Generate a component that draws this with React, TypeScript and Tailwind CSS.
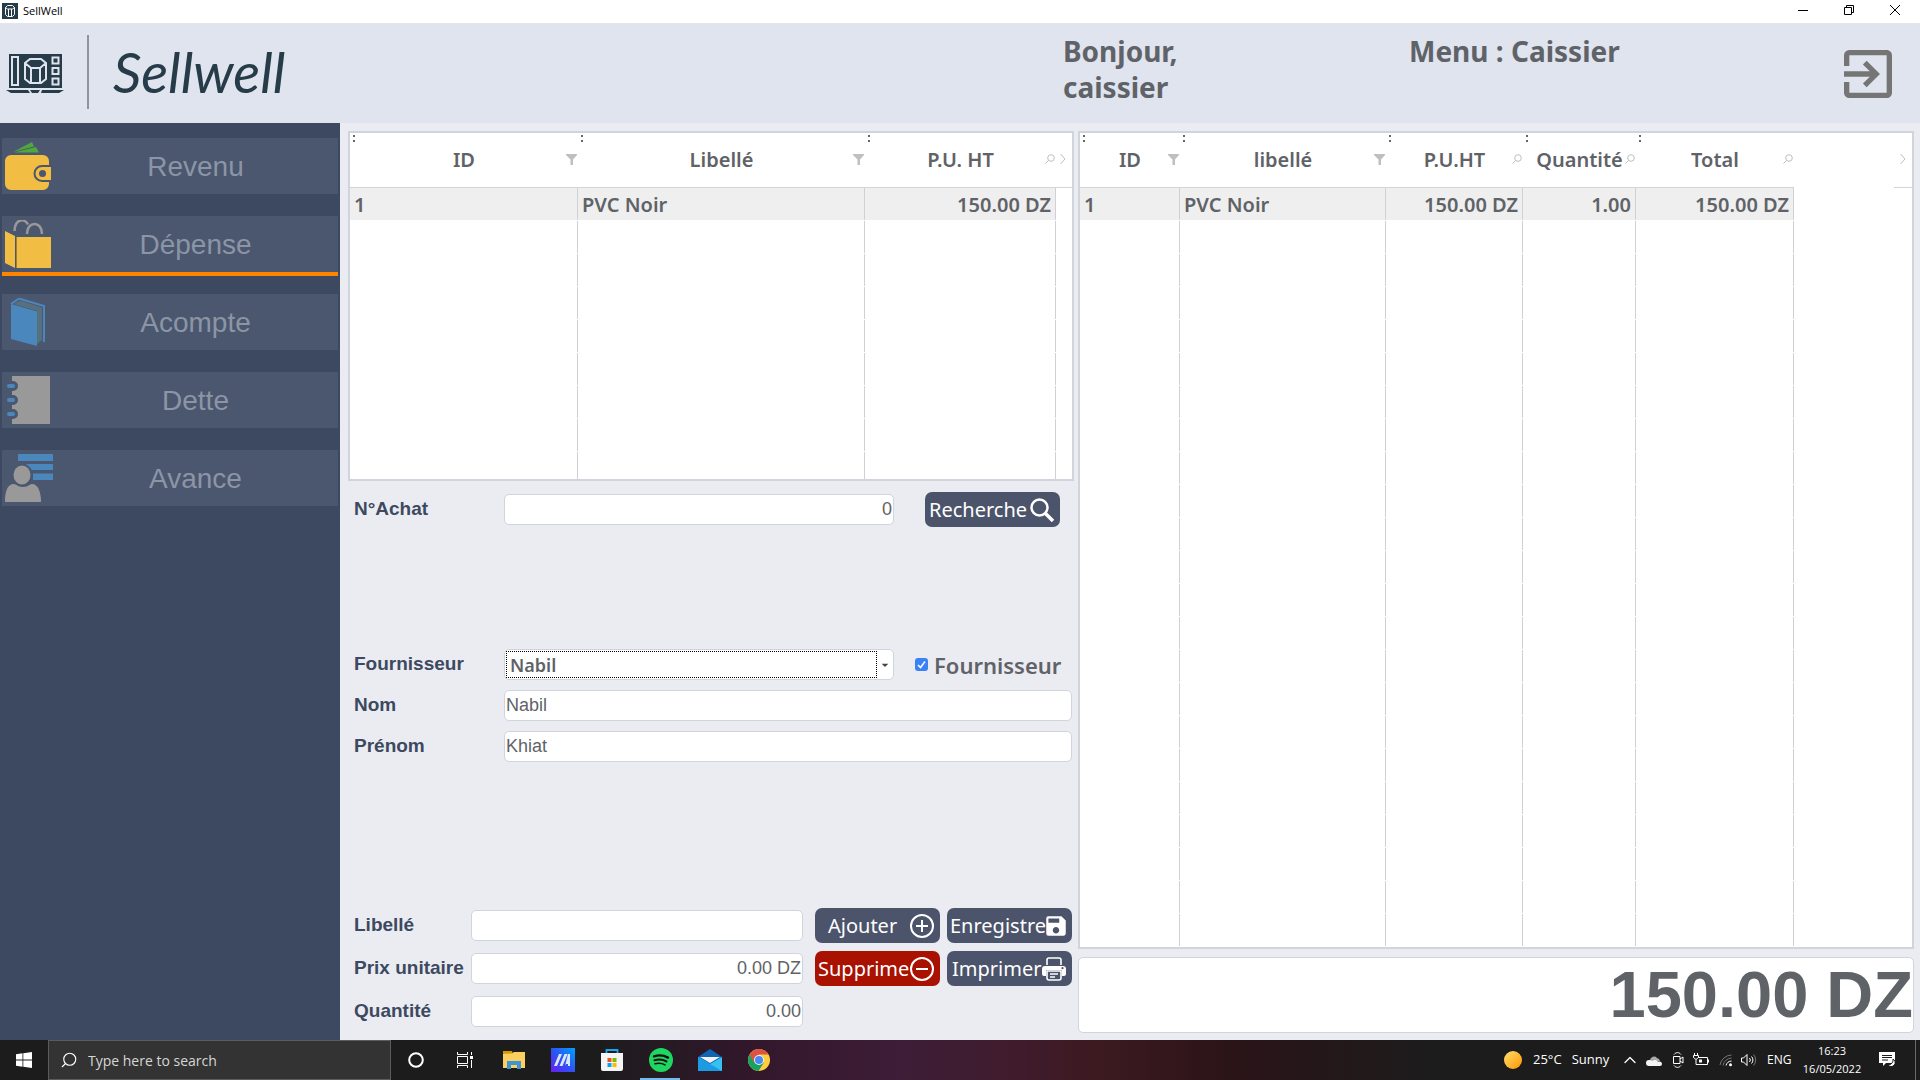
import type { ReactNode } from "react";
import { MdArrowDropDown, MdExitToApp, MdSave } from "react-icons/md";
import { ChevronUp, Search } from "lucide-react";

type Column = {
  label: string;
  width: string;
  icon: "filter" | "search";
  align?: "right";
};

const articleColumns: Column[] = [
  { label: "ID", width: "w-[228px]", icon: "filter" },
  { label: "Libellé", width: "w-[287px]", icon: "filter" },
  { label: "P.U. HT", width: "w-[191px]", icon: "search", align: "right" },
];

const cartColumns: Column[] = [
  { label: "ID", width: "w-[100px]", icon: "filter" },
  { label: "libellé", width: "w-[206px]", icon: "filter" },
  { label: "P.U.HT", width: "w-[137px]", icon: "search", align: "right" },
  { label: "Quantité", width: "w-[113px]", icon: "search", align: "right" },
  { label: "Total", width: "w-[158px]", icon: "search", align: "right" },
];

function FilterIcon() {
  return (
    <svg viewBox="0 0 11 11" className="h-[11px] w-[11px]" fill="#bfbfbf">
      <path d="M0 0h11v1L7 5.500V11H4.500V5.500L0 1z" />
    </svg>
  );
}

function LensIcon() {
  return (
    <svg viewBox="0 0 10 10" className="h-[10px] w-[10px]" fill="none" stroke="#bfbfbf">
      <circle cx="6" cy="4" r="3.3" />
      <path d="M3.600 6.400L.5 9.500" />
    </svg>
  );
}

function DataTable({ columns, rows, lineCount }: { columns: Column[]; rows: string[][]; lineCount: number }) {
  const lines = Array.from({ length: lineCount }, (_, i) => rows[i]);

  return (
    <table className="w-full table-fixed border-separate border-spacing-0 font-['Noto_Sans',sans-serif] text-[20px] text-[#5f6368]">
      <thead>
        <tr className="h-[55px]">
          {columns.map((col) => (
            <th key={col.label} className={`relative border-b border-[#d0d4dc] p-0 text-center font-semibold ${col.width}`}>
              <span className="absolute left-[3px] top-[2px] flex flex-col gap-[3px]">
                <i className="h-[2px] w-[2px] bg-[#666]" />
                <i className="h-[2px] w-[2px] bg-[#666]" />
              </span>
              {col.label}
              <button type="button" aria-label={`Options ${col.label}`} className="absolute right-px top-[21px]">
                {col.icon === "filter" ? <FilterIcon /> : <LensIcon />}
              </button>
            </th>
          ))}
          <th className="relative p-0">
            <button type="button" aria-label="Colonnes suivantes" className="absolute right-[6px] top-[21px]">
              <svg viewBox="0 0 6 10" className="h-[10px] w-[6px]" fill="none" stroke="#bfbfbf">
                <path d="M.5 0l4.500 5L.5 10" />
              </svg>
            </button>
            <span className="absolute right-0 bottom-0 h-px w-[18px] bg-[#d0d4dc]" />
          </th>
        </tr>
      </thead>
      <tbody>
        {lines.map((row, i) => (
          <tr key={i}>
            {columns.map((col) => (
              <td key={col.label} className={`p-0 font-semibold ${col.align === "right" ? "text-right" : "text-left"}`}>
                <div className={`mb-px h-8 border-r border-[#d0d1d4] px-1 leading-[33px] ${row ? "bg-[#efefef]" : ""}`}>
                  {row ? row[columns.indexOf(col)] : null}
                </div>
              </td>
            ))}
            <td className="p-0" />
          </tr>
        ))}
      </tbody>
    </table>
  );
}

function WalletIcon() {
  return (
    <svg viewBox="0 0 48 48" className="h-12 w-12">
      <path d="M8 10L27 0l2 4.500z" fill="#4fa83d" />
      <path d="M9 10.500L31 5l3 5.500z" fill="#4fa83d" />
      <path d="M6 13h32a6 6 0 0 1 6 6v4h-7a8.500 8.500 0 0 0 0 17h7v2a6 6 0 0 1-6 6H6a6 6 0 0 1-6-6V19a6 6 0 0 1 6-6z" fill="#f1bd42" />
      <path d="M37 25h9v13h-9a6.500 6.500 0 0 1 0-13z" fill="#f1bd42" />
      <circle cx="37.500" cy="31.500" r="3.500" fill="#4b576f" />
    </svg>
  );
}

function BagIcon() {
  return (
    <svg viewBox="0 0 48 48" className="h-12 w-12">
      <path d="M9.500 11C10-2 20-2 23 4.500M22 14C22 .5 37 .5 37 14" fill="none" stroke="#999" strokeWidth="2.500" />
      <path d="M0 11l10 5v32L0 43z" fill="#f1bd42" />
      <path d="M12 17h34v31H12z" fill="#f1bd42" />
      <path d="M11.500 17v31" stroke="#9b7f45" />
    </svg>
  );
}

function BookIcon() {
  return (
    <svg viewBox="0 0 48 48" className="h-12 w-12">
      <path d="M14 .5L39 8v36" fill="none" stroke="#4a87bd" strokeWidth="2" />
      <path d="M15 2.500L37 9.500V42l-5 4V13L8 6z" fill="#567080" />
      <path d="M6 6l26 7.500V48L6 41z" fill="#4a87bd" />
      <path d="M6 6l8-5.500" stroke="#4a87bd" strokeWidth="2" />
    </svg>
  );
}

function NotebookIcon() {
  return (
    <svg viewBox="0 0 48 48" className="h-12 w-12">
      <path d="M7 0h38v48H7z" fill="#999" />
      <path d="M4 10h4M4 24h4M4 38h4" stroke="#4b576f" strokeWidth="10" strokeLinecap="round" />
      <path d="M4 10h4M4 24h4M4 38h4" stroke="#4a87bd" strokeWidth="4" strokeLinecap="round" />
    </svg>
  );
}

function PersonIcon() {
  return (
    <svg viewBox="0 0 48 48" className="h-12 w-12">
      <path d="M13 0h35v7H13zM21 10h27v6H26zM28 19.500h20V26H28z" fill="#4a87bd" />
      <circle cx="17" cy="21" r="11" fill="#4b576f" />
      <ellipse cx="17" cy="21" rx="8.500" ry="9.500" fill="#999" />
      <path d="M0 48c0-10 2-18 9-18 3 0 3 3 9 3s6-3 9-3c6 0 9 8 9 18z" fill="#999" />
    </svg>
  );
}

const menu: { label: string; icon: ReactNode; active?: boolean }[] = [
  { label: "Revenu", icon: <WalletIcon /> },
  { label: "Dépense", icon: <BagIcon />, active: true },
  { label: "Acompte", icon: <BookIcon /> },
  { label: "Dette", icon: <NotebookIcon /> },
  { label: "Avance", icon: <PersonIcon /> },
];

function TitleBar() {
  return (
    <div className="flex h-6 items-start justify-between border-b border-[#e4e5ea] bg-white px-[2px]">
      <div className="flex items-center gap-[5px] pt-[3px]">
        <svg viewBox="0 0 16 16" className="h-4 w-4">
          <path d="M0 0h16v16H0z" fill="#263c48" />
          <path d="M5.500 2.500h5l2 2v7l-2 2h-5l-2-2v-7zM3.500 4.500l2 1.500h5l2-1.500M6.500 6v7M9.500 6v7" fill="none" stroke="#fff" />
        </svg>
        <span className="font-['Open_Sans',sans-serif] text-[11px] leading-4 text-black">SellWell</span>
      </div>
      <div className="flex">
        <button type="button" aria-label="Réduire" className="grid h-5 w-[46px] place-items-center">
          <svg viewBox="0 0 10 10" className="h-[10px] w-[10px]" stroke="#000"><path d="M0 5.500h10" /></svg>
        </button>
        <button type="button" aria-label="Restaurer" className="grid h-5 w-[46px] place-items-center">
          <svg viewBox="0 0 10 10" className="h-[10px] w-[10px]" fill="none" stroke="#000">
            <path d="M.5 2.500h7v7h-7zM2.500 2.500v-2h7v7h-2" />
          </svg>
        </button>
        <button type="button" aria-label="Fermer" className="grid h-5 w-[46px] place-items-center">
          <svg viewBox="0 0 10 10" className="h-[10px] w-[10px]" stroke="#000"><path d="M0 0l10 10M10 0L0 10" /></svg>
        </button>
      </div>
    </div>
  );
}

function Header() {
  return (
    <header className="flex h-[99px] bg-[#e0e4ef] font-['Noto_Sans',sans-serif] text-[28px] leading-9 font-bold text-[#5f6368]">
      <div className="flex flex-1 items-center pb-1 pl-[6px]">
        <svg viewBox="0 0 60 40" className="mt-1 h-10 w-[60px]">
          <path d="M3 0h53v34H3z" fill="#263c48" />
          <path d="M0 36h22l2 3H5zM24 36h10l-2 3h-6zM36 36h22l-5 3H35z" fill="#263c48" />
          <path d="M6 3h6v28H6z" fill="none" stroke="#e0e4ef" strokeWidth="2" />
          <path d="M24 5h11l5 4v16l-5 4H24l-5-4V9zM19 9l6 5h9l6-5M25 14v15M34 14v15" fill="none" stroke="#e0e4ef" strokeWidth="2" />
          <path d="M46.500 3.500h6v6h-6zM46.500 14h6v6h-6zM46.500 24.500h6v6h-6z" fill="#263c48" stroke="#e0e4ef" strokeWidth="2" />
        </svg>
        <div className="ml-[21px] h-[74px] w-[2px] bg-[#8f95a0]" />
        <span className="ml-6 font-['Lato',sans-serif] text-[56px] leading-[60px] font-normal text-[#263c48] italic">Sellwell</span>
      </div>
      <p className="w-[346px] pt-[9px]">
        Bonjour,
        <br />
        caissier
      </p>
      <p className="w-[427px] pt-[9px]">Menu : Caissier</p>
      <button type="button" aria-label="Déconnexion" className="mr-5 self-center">
        <MdExitToApp size={64} color="#757575" />
      </button>
    </header>
  );
}

function Sidebar() {
  return (
    <nav className="flex w-[340px] shrink-0 flex-col gap-[18px] bg-[#3d4960] px-[2px] pt-[15px]">
      {menu.map((item) => (
        <button
          key={item.label}
          type="button"
          className={`flex h-[60px] items-center border-b-4 bg-[#4b576f] bg-clip-padding pl-[3px] font-['Liberation_Sans',Arial,sans-serif] text-[28px] text-[#8b95a5] ${
            item.active ? "border-[#ff8500]" : "border-transparent"
          }`}
        >
          {item.icon}
          <span className="flex-1 pt-[2px] text-center">{item.label}</span>
        </button>
      ))}
    </nav>
  );
}

const fieldClass =
  "h-[31px] w-full min-w-0 rounded-[5px] border border-[#d0d4dc] bg-white px-px font-['Liberation_Sans',Arial,sans-serif] text-[18px] text-[#5f6368] outline-none";
const labelClass =
  "pb-[2px] font-['Liberation_Sans',Arial,sans-serif] text-[19px] leading-6 font-bold text-[#3d4960] whitespace-nowrap";
const buttonClass =
  "flex h-[35px] items-center rounded-[7px] text-white font-['Noto_Sans',sans-serif] text-[20px] leading-6 whitespace-nowrap";

function PurchaseForm() {
  return (
    <form className="flex flex-1 flex-col pt-[11px] pr-[2px] pb-1 pl-[6px]">
      <div className="grid grid-cols-[150px_1fr_178px] items-center">
        <label htmlFor="achat" className={labelClass}>N°Achat</label>
        <input id="achat" defaultValue="0" className={`${fieldClass} text-right`} />
        <button type="button" className={`${buttonClass} ml-[31px] w-[135px] justify-between bg-[#4b546a] pr-[6px] pl-1`}>
          Recherche
          <svg viewBox="0 0 24 24" className="h-6 w-6" fill="none" stroke="#fff">
            <circle cx="9.500" cy="9.500" r="8" strokeWidth="2.500" />
            <path d="M15 15l8 8" strokeWidth="3.500" />
          </svg>
        </button>
      </div>

      <div className="mt-[122px] grid grid-cols-[150px_1fr_178px] items-center gap-y-[10px]">
        <label htmlFor="fournisseur" className={labelClass}>Fournisseur</label>
        <div className="flex h-[31px] items-center rounded-[5px] border border-[#d0d4dc] bg-white p-px">
          <select
            id="fournisseur"
            className="h-[27px] min-w-0 flex-1 appearance-none border border-dotted border-black pl-[3px] font-['Noto_Sans',sans-serif] text-[18px] leading-6 font-semibold text-[#5f6368] outline-none"
          >
            <option>Nabil</option>
          </select>
          <MdArrowDropDown size={16} color="#444" className="-mr-px" />
        </div>
        <label className="flex items-center gap-[6px] pl-[21px] font-['Noto_Sans',sans-serif] text-[22px] leading-[30px] font-semibold text-[#5f6368]">
          <span className="relative flex">
            <input type="checkbox" defaultChecked className="h-[13px] w-[13px] appearance-none rounded-[3px] bg-[#3b82f6]" />
            <svg viewBox="0 0 13 13" className="pointer-events-none absolute inset-0" fill="none" stroke="#fff" strokeWidth="1.500">
              <path d="M3 7l2.500 2.500L10 3.500" />
            </svg>
          </span>
          Fournisseur
        </label>

        <label htmlFor="nom" className={labelClass}>Nom</label>
        <input id="nom" defaultValue="Nabil" className={`${fieldClass} col-span-2`} />

        <label htmlFor="prenom" className={labelClass}>Prénom</label>
        <input id="prenom" defaultValue="Khiat" className={`${fieldClass} col-span-2`} />
      </div>

      <div className="mt-auto grid auto-rows-[35px] grid-cols-[117px_1fr_137px_132px] items-center gap-y-2">
        <label htmlFor="libelle" className={labelClass}>Libellé</label>
        <input id="libelle" className={fieldClass} />
        <button type="button" className={`${buttonClass} ml-3 justify-between bg-[#4b546a] pr-[6px] pl-[13px]`}>
          Ajouter
          <svg viewBox="0 0 24 24" className="h-6 w-6" fill="none" stroke="#fff" strokeWidth="2">
            <circle cx="12" cy="12" r="11" />
            <path d="M12 6v12M6 12h12" />
          </svg>
        </button>
        <button type="button" className={`${buttonClass} ml-[7px] justify-between bg-[#4b546a] px-[3px]`}>
          Enregistre
          <MdSave size={26} className="-ml-1 shrink-0" />
        </button>

        <label htmlFor="prix" className={labelClass}>Prix unitaire</label>
        <input id="prix" defaultValue="0.00 DZ" className={`${fieldClass} text-right`} />
        <button type="button" className={`${buttonClass} ml-3 justify-between bg-[#a91101] pr-[6px] pl-[3px]`}>
          Supprime
          <svg viewBox="0 0 24 24" className="h-6 w-6 shrink-0" fill="none" stroke="#fff" strokeWidth="2">
            <circle cx="12" cy="12" r="11" />
            <path d="M6 12h12" />
          </svg>
        </button>
        <button type="button" className={`${buttonClass} ml-[7px] justify-between bg-[#4b546a] pr-[6px] pl-[5px]`}>
          Imprimer
          <svg viewBox="0 0 24 24" className="h-6 w-6" fill="none" stroke="#fff" strokeWidth="1.600">
            <path d="M5 8V3a2 2 0 0 1 2-2h10a2 2 0 0 1 2 2v5" />
            <path d="M3 9h18a3 3 0 0 1 3 3v5a2 2 0 0 1-2 2h-2v-6H4v6H2a2 2 0 0 1-2-2v-5a3 3 0 0 1 3-3z" fill="#fff" stroke="none" />
            <circle cx="20.500" cy="11.200" r="1.100" fill="#4b546a" stroke="none" />
            <path d="M5 14h14v7a2 2 0 0 1-2 2H7a2 2 0 0 1-2-2zM8 17h8M8 20h5" fill="#4b546a" />
          </svg>
        </button>

        <label htmlFor="quantite" className={labelClass}>Quantité</label>
        <input id="quantite" defaultValue="0.00" className={`${fieldClass} text-right`} />
      </div>
    </form>
  );
}

const slotClass = "relative grid h-10 w-[49px] place-items-center";

function Taskbar() {
  return (
    <footer className="flex h-10 items-center bg-[linear-gradient(90deg,#1c1c1c_31%,#32172b_39%,#3d1d37_47%,#3f1b2c_53%,#3c1a20_57%,#2b1418_64%,#1c1c1c_75%)] font-['Open_Sans',sans-serif] text-white">
      <button type="button" aria-label="Démarrer" className="grid h-10 w-12 place-items-center">
        <svg viewBox="0 0 16 16" className="h-4 w-4" fill="#fff">
          <path d="M0 2.200L6.500 1.300v6.200H0zM7.300 1.200L16 0v7.500H7.300zM0 8.400h6.500v6.300L0 13.800zM7.300 8.400H16V16l-8.700-1.200z" />
        </svg>
      </button>
      <label className="flex h-10 w-[343px] items-center gap-[10px] border border-[#5c5c5c] bg-[#333] pl-[11px]">
        <Search size={18} strokeWidth={1.500} className="-scale-x-100" />
        <input aria-label="Type here to search" placeholder="Type here to search" className="min-w-0 flex-1 text-[14px] placeholder-[#d6d6d6] outline-none" />
      </label>

      <button type="button" aria-label="Cortana" className={slotClass}>
        <svg viewBox="0 0 16 16" className="h-4 w-4" fill="none" stroke="#fff" strokeWidth="2"><circle cx="8" cy="8" r="6.800" /></svg>
      </button>
      <button type="button" aria-label="Task view" className={slotClass}>
        <svg viewBox="0 0 16 16" className="h-4 w-4" fill="none" stroke="#fff">
          <path d="M.5 0v2.500h10V0M.5 4.500h10v7H.5zM.5 16v-2.500h10V16M14.500 0v3M14.500 8v8" />
          <path d="M13 4h3v3h-3z" fill="#fff" stroke="none" />
        </svg>
      </button>
      <button type="button" aria-label="Explorer" className={slotClass}>
        <svg viewBox="0 0 22 18" className="h-[18px] w-[22px]">
          <path d="M0 0h9l1 3H0z" fill="#d99a00" />
          <path d="M0 3l9-.5L11 1h11v16H0z" fill="#fbd061" />
          <path d="M4 10h14v8h-4v-4H8v4H4z" fill="#3d94d6" />
        </svg>
      </button>
      <button type="button" aria-label="MyAsus" className={slotClass}>
        <svg viewBox="0 0 24 24" className="h-6 w-6">
          <defs>
            <linearGradient id="asus" x1="0" y1="1" x2="1" y2="0">
              <stop offset="0" stopColor="#6a1cf5" />
              <stop offset=".5" stopColor="#2b55f5" />
              <stop offset="1" stopColor="#00a2ff" />
            </linearGradient>
          </defs>
          <path d="M0 0h24v24H0z" fill="url(#asus)" />
          <path d="M3 18L8 6h3L6 18zM8.500 18l5-12h3l-5 12zM14 18l3-12h2v12h-2v-2h-2z" fill="#dbe6ff" />
        </svg>
      </button>
      <button type="button" aria-label="Store" className={slotClass}>
        <svg viewBox="0 0 24 24" className="h-6 w-6">
          <path d="M6.500 6V2h11v4" fill="none" stroke="#1ba8ef" strokeWidth="1.800" />
          <path d="M1 5h22v16a2 2 0 0 1-2 2H3a2 2 0 0 1-2-2z" fill="#f4f4f4" />
          <path d="M7.500 10h4v4h-4z" fill="#f25022" />
          <path d="M12.500 10h4v4h-4z" fill="#7fba00" />
          <path d="M7.500 15h4v4h-4z" fill="#00a4ef" />
          <path d="M12.500 15h4v4h-4z" fill="#ffb900" />
        </svg>
      </button>
      <button type="button" aria-label="Spotify" className={slotClass}>
        <svg viewBox="0 0 24 24" className="h-6 w-6" fill="none" stroke="#111" strokeLinecap="round">
          <circle cx="12" cy="12" r="12" fill="#1ed760" stroke="none" />
          <path d="M5 8.300c5-1.500 10-1 14 1.300" strokeWidth="2.400" />
          <path d="M5.500 12.200c4.500-1.200 8.500-.8 12 1.200" strokeWidth="2" />
          <path d="M6 15.800c3.800-.9 7-.6 10 1.100" strokeWidth="1.600" />
        </svg>
        <span className="absolute bottom-0 left-1 right-[5px] h-[2px] bg-[#76b9ed]" />
      </button>
      <button type="button" aria-label="Mail" className={slotClass}>
        <svg viewBox="0 0 24 22" className="h-[22px] w-6">
          <path d="M0 8l12-8 12 8v14H0z" fill="#0f64b4" />
          <path d="M0 8l12 7 12-7v14H0z" fill="#35c1f1" />
          <path d="M0 8l24 14H0z" fill="#1c9be3" />
          <path d="M2 8h20l-10 6z" fill="#f2f2f2" />
        </svg>
      </button>
      <button type="button" aria-label="Chrome" className={slotClass}>
        <svg viewBox="0 0 22 22" className="h-[22px] w-[22px]">
          <circle cx="11" cy="11" r="11" fill="#ffcd40" />
          <path d="M11 11L1.500 5.500A11 11 0 0 0 10.500 22L15.800 13.700z" fill="#1aa15f" />
          <path d="M11 5.500h9.500A11 11 0 0 0 1.500 5.500l4.700 8z" fill="#de5246" />
          <circle cx="11" cy="11" r="5" fill="#f1f1f1" />
          <circle cx="11" cy="11" r="4" fill="#4a8af4" />
        </svg>
      </button>

      <div className="ml-auto flex items-center">
        <svg viewBox="0 0 18 18" className="h-[18px] w-[18px]">
          <defs>
            <linearGradient id="sun" x1="0" y1="0" x2="1" y2="1">
              <stop offset="0" stopColor="#ffe070" />
              <stop offset="1" stopColor="#ff9500" />
            </linearGradient>
          </defs>
          <circle cx="9" cy="9" r="9" fill="url(#sun)" />
        </svg>
        <div className="ml-[11px] flex w-[91px] gap-[10px] text-[13px]">
          <span>25°C</span>
          <span>Sunny</span>
        </div>
        <ChevronUp size={20} strokeWidth={1.500} className="-ml-1" />
        <svg viewBox="0 0 16 11" className="ml-[6px] h-[11px] w-4">
          <path d="M4 5a4 4 0 0 1 7-2 4 4 0 0 1 3 3L4 8z" fill="#aaa" />
          <path d="M3 11a3 3 0 0 1 0-6c1 0 2 0 3 1 3-2 5-1 6 1 2-1 4 0 4 2a2 2 0 0 1-2 2z" fill="#f4f4f4" />
        </svg>
        <svg viewBox="0 0 12 16" className="ml-[10px] h-4 w-3" fill="none" stroke="#fff">
          <path d="M1.500 4.500H8v7H1.500zM8 7l3-2v6L8 9M2 2.500C4 0 7 0 9 2.500M2 13.500c2 2.500 5 2.500 7 0" />
        </svg>
        <svg viewBox="0 0 16 14" className="ml-[9px] h-[14px] w-4" fill="none" stroke="#fff">
          <path d="M5 4.500h9.500v7h-10M15.500 6.500v3M1.500 0v2.500M4.500 0v2.500M.5 2.500h5v2L3 6.500.5 4.500zM3 6.500v5h2" />
          <path d="M6 6.500h3v3H6z" fill="#fff" stroke="none" />
        </svg>
        <svg viewBox="0 0 14 14" className="ml-[10px] h-[14px] w-[14px]" fill="none">
          <path d="M1 12A12 12 0 0 1 12.500 2M4 12.500a9 9 0 0 1 8.500-7.500" stroke="#777" />
          <path d="M7 12.500a6 6 0 0 1 5.500-4.500" stroke="#fff" />
          <circle cx="11.500" cy="11.700" r="1.500" fill="#fff" />
        </svg>
        <svg viewBox="0 0 16 14" className="ml-2 h-[14px] w-4" fill="none" stroke="#fff">
          <path d="M.5 5h2l3.500-3.500v11L2.500 9h-2zM8.500 5a3 3 0 0 1 0 4M10.500 3.500a5 5 0 0 1 0 7" />
          <path d="M12.500 1.500a8 8 0 0 1 0 11" stroke="#777" />
        </svg>
        <span className="ml-[10px] w-[35px] text-[12px]">ENG</span>
        <div className="w-[60px] text-center text-[11px] leading-[18px]">
          <div>16:23</div>
          <div>16/05/2022</div>
        </div>
        <svg viewBox="0 0 16 16" className="ml-[17px] h-4 w-4">
          <path d="M0 0h16v11H7l-3 3v-3H0z" fill="#fff" />
          <path d="M3 3.500h10M3 5.500h10M3 8h6" stroke="#1c1c1c" />
          <path d="M14 7a5 5 0 0 1-5 6 4 4 0 1 0 5-6z" fill="#fff" stroke="#1c1c1c" />
        </svg>
        <span className="ml-5 h-10 w-[5px] border-l border-[#6b6b6b]" />
      </div>
    </footer>
  );
}

export default function App() {
  return (
    <div className="flex min-h-screen flex-col bg-[#ebecf2]">
      <TitleBar />
      <Header />
      <div className="flex flex-1">
        <Sidebar />
        <main className="grid flex-1 grid-cols-[726fr_836fr] gap-1 pt-2 pr-[6px] pb-[7px] pl-2">
          <section className="flex min-w-0 flex-col">
            <div className="h-[350px] shrink-0 overflow-hidden border-2 border-[#d0d4dc] bg-white">
              <DataTable columns={articleColumns} rows={[["1", "PVC Noir", "150.00 DZ"]]} lineCount={9} />
            </div>
            <PurchaseForm />
          </section>
          <section className="flex min-w-0 flex-col gap-2">
            <div className="flex-1 overflow-hidden border-2 border-[#d0d4dc] bg-white">
              <DataTable
                columns={cartColumns}
                rows={[["1", "PVC Noir", "150.00 DZ", "1.00", "150.00 DZ"]]}
                lineCount={23}
              />
            </div>
            <input
              aria-label="Total"
              readOnly
              value="150.00 DZ"
              className="h-[76px] w-full rounded-[5px] border border-[#d0d4dc] bg-white text-right font-['Liberation_Sans',Arial,sans-serif] text-[65px] font-bold text-[#5f6368] outline-none"
            />
          </section>
        </main>
      </div>
      <Taskbar />
    </div>
  );
}
